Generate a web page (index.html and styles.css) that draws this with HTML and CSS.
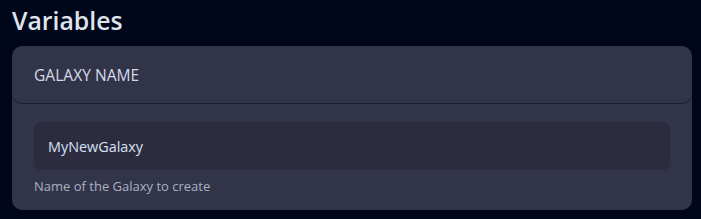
FILE: index.html
```html
<!DOCTYPE html>
<html>
<head>
<meta charset="utf-8">
<link rel="stylesheet" href="styles.css">
</head>
<body>
<div class="page">
  <h1 class="title">Variables</h1>
  <section class="card">
    <div class="card-header">GALAXY NAME</div>
    <div class="card-body">
      <div class="input">MyNewGalaxy</div>
      <div class="hint">Name of the Galaxy to create</div>
    </div>
  </section>
</div>
</body>
</html>
```
FILE: styles.css
```css
html, body {
  margin: 0;
  padding: 0;
  background: #01071a;
}
.page {
  padding: 4px 9px 0 12px;
  font-family: "Open Sans", "Noto Sans", sans-serif;
}
.title {
  margin: 0;
  height: 42px;
  font-size: 24.8px;
  line-height: 32px;
  font-weight: 600;
  color: #dfe4ee;
}
.card {
  background: #323449;
  border-radius: 10px;
  height: 164px;
}
.card-header {
  height: 57px;
  box-sizing: border-box;
  padding: 0 22px;
  display: flex;
  align-items: center;
  font-size: 15.6px;
  color: #d4dbe8;
  border-radius: 10px;
  box-shadow: 0 1px 0 #1c1d2a;
}
.card-body {
  padding: 19px 22px 0 22px;
}
.input {
  height: 48px;
  background: #2d2b40;
  border-radius: 7px;
  display: flex;
  align-items: center;
  padding: 0 14px;
  font-size: 14.4px;
  color: #d8e2f2;
}
.hint {
  margin-top: 7px;
  font-size: 13px;
  color: #aab0c4;
}
```
